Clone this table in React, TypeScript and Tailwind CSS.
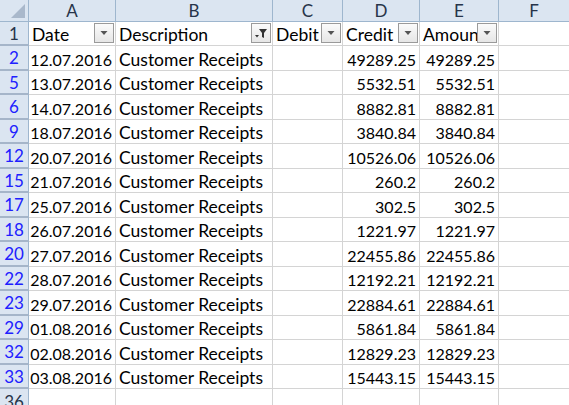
const rows = [
  { n: "2", date: "12.07.2016", credit: "49289.25" },
  { n: "5", date: "13.07.2016", credit: "5532.51" },
  { n: "6", date: "14.07.2016", credit: "8882.81" },
  { n: "9", date: "18.07.2016", credit: "3840.84" },
  { n: "12", date: "20.07.2016", credit: "10526.06" },
  { n: "15", date: "21.07.2016", credit: "260.2" },
  { n: "17", date: "25.07.2016", credit: "302.5" },
  { n: "18", date: "26.07.2016", credit: "1221.97" },
  { n: "20", date: "27.07.2016", credit: "22455.86" },
  { n: "22", date: "28.07.2016", credit: "12192.21" },
  { n: "23", date: "29.07.2016", credit: "22884.61" },
  { n: "29", date: "01.08.2016", credit: "5861.84" },
  { n: "32", date: "02.08.2016", credit: "12829.23" },
  { n: "33", date: "03.08.2016", credit: "15443.15" },
];

const cols = [
  { label: "A", w: "w-[87px]" },
  { label: "B", w: "w-[157px]" },
  { label: "C", w: "w-[70px]" },
  { label: "D", w: "w-[77px]" },
  { label: "E", w: "w-[79px]" },
  { label: "F", w: "w-[70px]" },
];

function FilterButton({ active }: { active?: boolean }) {
  return (
    <span className="absolute z-10 right-[1px] top-[1px] w-[20px] h-[20px] border border-[#9a9a9a] bg-gradient-to-b from-[#fbfbfb] to-[#e6e6e6] flex items-center justify-center">
      {active ? (
        <svg width="14" height="12" viewBox="0 0 14 12">
          <path d="M5 2h8l-3 4v5l-2-1V6z" fill="#333" />
          <path d="M1 8h4l-2 2.5z" fill="#333" />
        </svg>
      ) : (
        <svg width="10" height="6" viewBox="0 0 10 6">
          <path d="M1.5 1h7L5 5z" fill="#555" />
        </svg>
      )}
    </span>
  );
}

function Cell({ w, children, right, last, big }: { w: string; children?: React.ReactNode; right?: boolean; last?: boolean; big?: boolean }) {
  return (
    <div
      className={`${w} shrink-0 h-full border-b border-[#d4d4d4] ${last ? "" : "border-r"} flex items-end pb-[2px] px-[3px] overflow-hidden whitespace-nowrap ${right ? "justify-end" : ""} ${big ? "text-[17.5px]" : ""}`}
    >
      {children}
    </div>
  );
}

function HeadCell({ w, label, active }: { w: string; label: string; active?: boolean }) {
  return (
    <div className={`${w} shrink-0 h-full border-b border-r border-[#d4d4d4] relative flex items-end pb-[2px] px-[3px] overflow-hidden whitespace-nowrap text-[17.5px]`}>
      {label}
      <FilterButton active={active} />
    </div>
  );
}

export default function App() {
  const all = [{ n: "1", header: true } as const, ...rows.map((r) => ({ ...r, header: false as const }))];
  return (
    <div className="w-[569px] h-[405px] overflow-hidden bg-white text-black text-[16px] leading-none" style={{ fontFamily: "Lato, 'Open Sans', sans-serif" }}>
      {/* column headings */}
      <div className="flex h-[22px] bg-[#dbe5f1] border-b border-[#9eb6ce]">
        <div className="w-[29px] shrink-0 border-r border-[#9eb6ce] relative">
          <svg className="absolute right-[3px] bottom-[3px]" width="14" height="14" viewBox="0 0 14 14">
            <path d="M14 0V14H0z" fill="#a9b8cb" />
          </svg>
        </div>
        {cols.map((c, i) => (
          <div key={c.label} className={`${c.w} shrink-0 ${i < 5 ? "border-r" : ""} border-[#9eb6ce] flex items-center justify-center text-[#27344a] text-[17px]`}>
            {c.label}
          </div>
        ))}
      </div>

      {all.map((r, i) => (
        <div key={r.n} className={`flex ${i % 2 === 0 ? "h-[24px]" : "h-[25px]"}`}>
          <div
            className={`w-[29px] shrink-0 h-full bg-[#dbe5f1] border-r border-[#9eb6ce] border-b-2 border-b-[#a5b5c9] flex items-center justify-center text-[17px] ${r.header ? "text-[#27344a]" : "text-[#2020ff]"}`}
          >
            {r.n}
          </div>
          {r.header ? (
            <>
              <HeadCell w="w-[87px]" label="Date" />
              <HeadCell w="w-[157px]" label="Description" active />
              <HeadCell w="w-[70px]" label="Debit" />
              <HeadCell w="w-[77px]" label="Credit" />
              <HeadCell w="w-[79px]" label="Amount" />
              <Cell w="w-[70px]" last />
            </>
          ) : (
            <>
              <Cell w="w-[87px]" right>{r.date}</Cell>
              <Cell w="w-[157px]" big>Customer Receipts</Cell>
              <Cell w="w-[70px]" />
              <Cell w="w-[77px]" right>{r.credit}</Cell>
              <Cell w="w-[79px]" right>{r.credit}</Cell>
              <Cell w="w-[70px]" last />
            </>
          )}
        </div>
      ))}

      <div className="flex h-[24px]">
        <div className="w-[29px] shrink-0 h-full bg-[#dbe5f1] border-r border-[#9eb6ce] flex items-center justify-center text-[17px] text-[#27344a]">
          36
        </div>
        {cols.map((c, i) => (
          <Cell key={c.label} w={c.w} last={i === 5} />
        ))}
      </div>
    </div>
  );
}
